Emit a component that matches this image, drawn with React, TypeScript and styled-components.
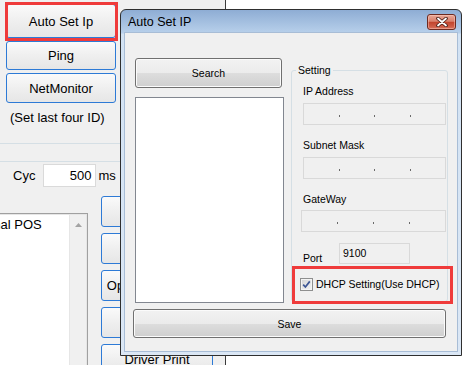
import styled, { createGlobalStyle } from "styled-components";

const GlobalStyle = createGlobalStyle`
  html, body {
    margin: 0;
    padding: 0;
  }
  body {
    width: 471px;
    height: 365px;
    overflow: hidden;
    background: #f0f0f0;
    font-family: "Liberation Sans", Arial, sans-serif;
  }
`;

const Stage = styled.div`
  position: relative;
  width: 471px;
  height: 365px;
  overflow: hidden;
  display: flex;
  background: #ffffff;
`;

/* ---------- background application ---------- */

const LeftPanel = styled.div`
  width: 225px;
  flex: none;
  background: #f0f0f0;
  border-right: 1px solid #3a3a3a;
  display: flex;
  flex-direction: column;
  font-size: 13px;
  color: #000;
`;

const TopGroup = styled.div`
  height: 144px;
  flex: none;
  box-sizing: border-box;
  border-bottom: 1px solid #d5dfe5;
  padding: 4px 0 0 6px;
  display: flex;
  flex-direction: column;
`;

const ButtonColumn = styled.div<{ $w: number; $gap: number }>`
  width: ${p => p.$w}px;
  flex: none;
  display: flex;
  flex-direction: column;
  gap: ${p => p.$gap}px;
`;

const AppButton = styled.button<{ $h: number }>`
  height: ${p => p.$h}px;
  flex: none;
  width: 100%;
  box-sizing: border-box;
  padding: 0;
  border: 1px solid #2d7ad6;
  border-radius: 3px;
  background: linear-gradient(#fafafa, #efefef 50%, #e6e6e6);
  font: 13px "Liberation Sans", Arial, sans-serif;
  color: #000;
  white-space: nowrap;
  overflow: hidden;
`;

const Hint = styled.div`
  margin: 7px 0 0 4px;
  line-height: 16px;
`;

const GroupGap = styled.div`
  height: 18px;
  flex: none;
  box-sizing: border-box;
  border-bottom: 1px solid #d5dfe5;
`;

const CycRow = styled.div`
  display: flex;
  flex: none;
  align-items: center;
  height: 23px;
  margin-top: 2px;
  padding-left: 13px;
`;

const CycInput = styled.div`
  width: 53px;
  height: 23px;
  box-sizing: border-box;
  margin: 0 2px 0 8px;
  padding-right: 4px;
  border: 1px solid #dadada;
  background: #fff;
  text-align: right;
  line-height: 21px;
`;

const LowerArea = styled.div`
  display: flex;
  align-items: flex-start;
  gap: 13px;
  margin-top: 9px;
  flex: 1;
  min-height: 0;
`;

const PrinterList = styled.div`
  margin: 17px 0 0 -41px;
  width: 129px;
  height: 200px;
  flex: none;
  box-sizing: border-box;
  border: 1px solid #a0a0a0;
  border-bottom: none;
  box-shadow: inset -1px 1px 0 #e6e6e6;
  background: #fff;
  display: flex;
`;

const ListText = styled.div`
  flex: 1;
  padding: 3px 0 0 3px;
  line-height: 16px;
  white-space: nowrap;
`;

const ScrollTrack = styled.div`
  width: 17px;
  margin: 1px 1px 0 0;
  background: #f0f0f0;
  border-left: 1px solid #e6e6e6;
  display: flex;
  justify-content: center;
  align-items: flex-start;
  padding-top: 8px;
  box-sizing: border-box;
`;

const WhiteArea = styled.div`
  flex: 1;
  background: #ffffff;
`;

/* ---------- dialog window ---------- */

const Window = styled.div`
  position: absolute;
  left: 120px;
  top: 9px;
  width: 342px;
  height: 347px;
  box-sizing: border-box;
  border: 1px solid #2f2f2f;
  border-radius: 6px 6px 0 0;
  background: linear-gradient(#8eadd4 0px, #b8d0eb 23px, #d2e2f3 24px, #dbe7f5 100%);
  padding: 0 4px 4px;
  display: flex;
  flex-direction: column;
  font-family: "Liberation Sans", Arial, sans-serif;
`;

const TitleBar = styled.div`
  height: 23px;
  flex: none;
  display: flex;
  align-items: center;
  justify-content: space-between;
  padding: 0 1px 0 3px;
  font-size: 12.5px;
  color: #000;
`;

const CloseButton = styled.div`
  width: 29px;
  height: 16px;
  box-sizing: border-box;
  border: 1px solid #6e2a20;
  border-radius: 3px;
  background: linear-gradient(#e9a897 0%, #d9806c 45%, #c2452e 52%, #cd5a44 80%, #d9755f 100%);
  box-shadow: inset 0 0 0 1px rgba(255, 210, 200, 0.45);
  display: flex;
  align-items: center;
  justify-content: center;
`;

const Client = styled.div`
  flex: 1;
  background: #f0f0f0;
  box-shadow: 0 0 0 1px #a8bdd6;
  padding: 25px 11px 0 8px;
  display: flex;
  flex-direction: column;
  font-size: 10.5px;
  color: #000;
`;

const TopRow = styled.div`
  display: grid;
  grid-template-columns: 149px 157px;
  column-gap: 7px;
  align-items: start;
  padding-left: 2px;
`;

const LeftCol = styled.div`
  display: flex;
  flex-direction: column;
  gap: 9px;
`;

const DialogButton = styled.button<{ $h: number; $w?: number }>`
  height: ${p => p.$h}px;
  width: ${p => (p.$w ? `${p.$w}px` : "100%")};
  box-sizing: border-box;
  padding: 0;
  border: 1px solid #707070;
  border-radius: 3px;
  background: linear-gradient(#f2f2f2 0%, #ebebeb 50%, #dddddd 51%, #cfcfcf 100%);
  box-shadow: inset 0 0 0 1px #fbfbfb;
  font: 10.5px "Liberation Sans", Arial, sans-serif;
  color: #000;
`;

const ResultList = styled.div`
  height: 206px;
  box-sizing: border-box;
  border: 1px solid #828790;
  background: #fff;
`;

const GroupBox = styled.fieldset`
  margin: 5px 0 0;
  padding: 0;
  min-width: 0;
  border: 1px solid #d5dfe5;
  border-radius: 3px;
`;

const GroupLegend = styled.legend`
  margin-left: 4px;
  padding: 0 2px;
  line-height: 14px;
`;

const GroupBody = styled.div`
  padding: 7px 1px 10px 11px;
  display: flex;
  flex-direction: column;
`;

const FieldLabel = styled.div<{ $gap: number }>`
  line-height: 14px;
  margin-bottom: ${p => p.$gap}px;
`;

const IpField = styled.div<{ $h: number; $shift?: number; $after: number }>`
  height: ${p => p.$h}px;
  box-sizing: border-box;
  margin-left: ${p => p.$shift ?? 0}px;
  margin-bottom: ${p => p.$after}px;
  border: 1px solid #d9d9d9;
  background: #f0f0f0;
  display: flex;
  align-items: center;
`;

const IpSegment = styled.span`
  flex: 1;
`;

const IpDot = styled.span`
  width: 1px;
  height: 2px;
  margin-top: 3px;
  background: #6a6a6a;
`;

const PortRow = styled.div`
  display: flex;
  height: 22px;
  margin-bottom: 13px;
`;

const PortLabel = styled.div`
  width: 36px;
  line-height: 14px;
  align-self: flex-end;
`;

const PortField = styled.div`
  width: 71px;
  height: 21px;
  box-sizing: border-box;
  border: 1px solid #d9d9d9;
  background: #f0f0f0;
  padding: 2px 0 0 3px;
  line-height: 14px;
`;

const CheckRow = styled.label`
  display: flex;
  align-items: center;
  gap: 3px;
  height: 13px;
  margin-left: -3px;
  line-height: 13px;
  white-space: nowrap;
`;

const CheckBox = styled.span`
  width: 13px;
  height: 13px;
  flex: none;
  box-sizing: border-box;
  border: 1px solid #8e8f8f;
  background: linear-gradient(135deg, #d4d4d4, #f4f4f4);
  box-shadow: inset 0 0 0 1px #f4f4f4;
  display: flex;
  align-items: center;
  justify-content: center;
`;

const SaveRow = styled.div`
  margin-top: 6px;
`;

/* ---------- annotations ---------- */

const Highlight = styled.div<{ $x: number; $y: number; $w: number; $h: number }>`
  position: absolute;
  left: ${p => p.$x}px;
  top: ${p => p.$y}px;
  width: ${p => p.$w}px;
  height: ${p => p.$h}px;
  box-sizing: border-box;
  border: 3px solid #ef3b3b;
  pointer-events: none;
`;

const IpInput = ({ after, shift }: { after: number; shift?: number }) => (
  <IpField $h={22} $after={after} $shift={shift}>
    <IpSegment />
    <IpDot />
    <IpSegment />
    <IpDot />
    <IpSegment />
    <IpDot />
    <IpSegment />
  </IpField>
);

export default function App() {
  return (
    <>
      <GlobalStyle />
      <Stage>
        <LeftPanel>
          <TopGroup>
            <ButtonColumn $w={110} $gap={3}>
              <AppButton $h={34}>Auto Set Ip</AppButton>
              <AppButton $h={29}>Ping</AppButton>
              <AppButton $h={30}>NetMonitor</AppButton>
            </ButtonColumn>
            <Hint>(Set last four ID)</Hint>
          </TopGroup>
          <GroupGap />
          <CycRow>
            <span>Cyc</span>
            <CycInput>500</CycInput>
            <span>ms</span>
          </CycRow>
          <LowerArea>
            <PrinterList>
              <ListText>Thermal POS</ListText>
              <ScrollTrack>
                <svg width="7" height="4" viewBox="0 0 7 4">
                  <path d="M0 4 L3.5 0 L7 4 Z" fill="#a3a3a3" />
                </svg>
              </ScrollTrack>
            </PrinterList>
            <ButtonColumn $w={112} $gap={6}>
              <AppButton $h={31}>Print Test</AppButton>
              <AppButton $h={31}>Cut Paper</AppButton>
              <AppButton $h={31}>Open Money Box</AppButton>
              <AppButton $h={31}>Status</AppButton>
              <AppButton $h={31}>Driver Print</AppButton>
            </ButtonColumn>
          </LowerArea>
        </LeftPanel>
        <WhiteArea />

        <Window>
          <TitleBar>
            <span>Auto Set IP</span>
            <CloseButton>
              <svg width="12" height="10" viewBox="0 0 12 10">
                <path d="M2 1.5 L10 8.5 M10 1.5 L2 8.5" stroke="#4a1d16" strokeWidth="3.6" strokeLinecap="round" />
                <path d="M2 1.5 L10 8.5 M10 1.5 L2 8.5" stroke="#ffffff" strokeWidth="1.8" strokeLinecap="round" />
              </svg>
            </CloseButton>
          </TitleBar>
          <Client>
            <TopRow>
              <LeftCol>
                <DialogButton $h={30} $w={147}>Search</DialogButton>
                <ResultList />
              </LeftCol>
              <GroupBox>
                <GroupLegend>Setting</GroupLegend>
                <GroupBody>
                  <FieldLabel $gap={5}>IP Address</FieldLabel>
                  <IpInput after={13} />
                  <FieldLabel $gap={5}>Subnet Mask</FieldLabel>
                  <IpInput after={13} />
                  <FieldLabel $gap={4}>GateWay</FieldLabel>
                  <IpInput after={11} shift={-2} />
                  <PortRow>
                    <PortLabel>Port</PortLabel>
                    <PortField>9100</PortField>
                  </PortRow>
                  <CheckRow>
                    <CheckBox>
                      <svg width="9" height="9" viewBox="0 0 9 9">
                        <path d="M1.2 4.6 L3.4 7 L7.8 1.4" stroke="#3d5694" strokeWidth="1.7" fill="none" />
                      </svg>
                    </CheckBox>
                    DHCP Setting(Use DHCP)
                  </CheckRow>
                </GroupBody>
              </GroupBox>
            </TopRow>
            <SaveRow>
              <DialogButton $h={29}>Save</DialogButton>
            </SaveRow>
          </Client>
        </Window>

        <Highlight $x={5} $y={2} $w={113} $h={39} />
        <Highlight $x={292} $y={266} $w={161} $h={38} />
      </Stage>
    </>
  );
}
